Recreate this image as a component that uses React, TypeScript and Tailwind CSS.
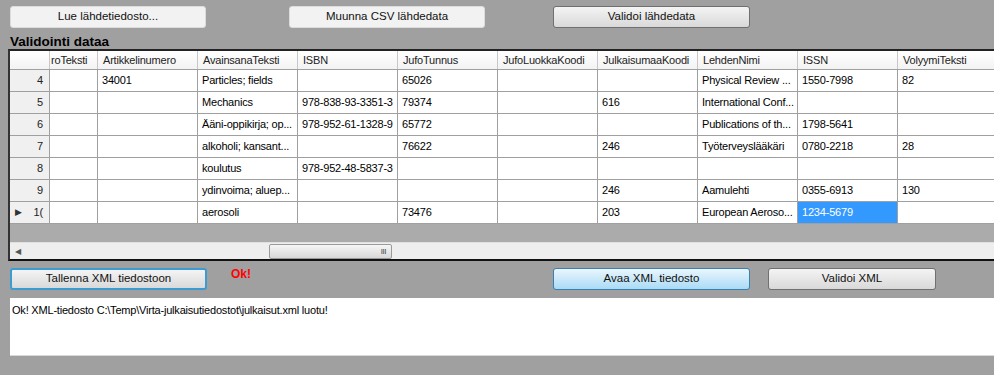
import React from "react";

type Row = { n: string; cells: string[]; current?: boolean };

const columns = [
  { name: "roTeksti", w: "w-[48px]" },
  { name: "Artikkelinumero", w: "w-[100px]" },
  { name: "AvainsanaTeksti", w: "w-[100px]" },
  { name: "ISBN", w: "w-[100px]" },
  { name: "JufoTunnus", w: "w-[100px]" },
  { name: "JufoLuokkaKoodi", w: "w-[100px]" },
  { name: "JulkaisumaaKoodi", w: "w-[100px]" },
  { name: "LehdenNimi", w: "w-[100px]" },
  { name: "ISSN", w: "w-[100px]" },
  { name: "VolyymiTeksti", w: "w-[100px]" },
];

const rows: Row[] = [
  { n: "4", cells: ["", "34001", "Particles; fields", "", "65026", "", "", "Physical Review ...", "1550-7998", "82"] },
  { n: "5", cells: ["", "", "Mechanics", "978-838-93-3351-3", "79374", "", "616", "International Conf...", "", ""] },
  { n: "6", cells: ["", "", "Ääni-oppikirja; op...", "978-952-61-1328-9", "65772", "", "", "Publications of th...", "1798-5641", ""] },
  { n: "7", cells: ["", "", "alkoholi; kansant...", "", "76622", "", "246", "Työterveyslääkäri", "0780-2218", "28"] },
  { n: "8", cells: ["", "", "koulutus", "978-952-48-5837-3", "", "", "", "", "", ""] },
  { n: "9", cells: ["", "", "ydinvoima; aluep...", "", "", "", "246", "Aamulehti", "0355-6913", "130"] },
  { n: "1(", cells: ["", "", "aerosoli", "", "73476", "", "203", "European Aeroso...", "1234-5679", ""], current: true },
];

function WinButton({ label, variant = "normal", className = "" }: { label: string; variant?: "flat" | "normal" | "focus" | "hover"; className?: string }) {
  const styles = {
    flat: "bg-[#f2f2f2] border border-[#dcdcdc]",
    normal: "bg-gradient-to-b from-[#f4f4f4] to-[#d9d9d9] border border-[#707070]",
    focus: "bg-gradient-to-b from-[#f4f4f4] to-[#d9d9d9] border-2 border-[#3c9bd0]",
    hover: "bg-gradient-to-b from-[#eaf6fd] to-[#a9dbf6] border border-[#3c7fb1]",
  }[variant];
  return (
    <button className={`h-[22px] shrink-0 rounded-[3px] flex items-center justify-center text-[11.5px] text-[#111] ${styles} ${className}`}>
      {label}
    </button>
  );
}

export default function App() {
  return (
    <div className="w-[994px] h-[375px] bg-[#a0a0a0] overflow-hidden" style={{ fontFamily: '"Liberation Sans", Arial, sans-serif' }}>
      {/* top buttons */}
      <div className="flex items-center pt-[6px] pl-[10px]">
        <WinButton label="Lue lähdetiedosto..." variant="flat" className="w-[196px]" />
        <WinButton label="Muunna CSV lähdedata" variant="flat" className="w-[196px] ml-[83px]" />
        <WinButton label="Validoi lähdedata" className="w-[197px] ml-[68px]" />
      </div>

      <div className="pl-[10px] mt-[6px] h-[15px] leading-[15px] text-[13.5px] font-bold text-black">Validointi dataa</div>

      {/* grid */}
      <div className="ml-[8px] w-[986px] h-[212px] border-t-2 border-l-2 border-b-2 border-t-[#222] border-l-[#333] border-b-[#111] bg-[#ababab] overflow-hidden flex flex-col text-[11px] tracking-[-0.2px]">
        <div className="flex h-[19px] shrink-0 bg-gradient-to-b from-white to-[#f3f3f3] border-b border-[#a0a0a0]">
          <div className="w-[40px] shrink-0 border-r border-[#c8c8c8]" />
          {columns.map((c, i) => (
            <div key={c.name} className={`${c.w} shrink-0 border-r border-[#c8c8c8] ${i === 0 ? "pl-[1px]" : "pl-[5px]"} flex items-center text-[#222] whitespace-nowrap overflow-hidden`}>
              {c.name}
            </div>
          ))}
        </div>
        {rows.map((r) => (
          <div key={r.n} className="flex h-[22px] shrink-0">
            <div className="w-[40px] shrink-0 bg-[#f0f0f0] border-r border-b border-[#a0a0a0] flex items-center justify-between pl-[5px] pr-[6px] text-[#222]">
              <span className="text-[9px] text-[#333]">{r.current ? "▶" : ""}</span>
              <span>{r.n}</span>
            </div>
            {columns.map((c, i) => {
              const sel = r.current && c.name === "ISSN";
              return (
                <div
                  key={c.name}
                  className={`${c.w} shrink-0 border-r border-b border-[#a0a0a0] pl-[4px] flex items-center whitespace-nowrap overflow-hidden ${sel ? "bg-[#3399ff] text-white" : "bg-white text-black"}`}
                >
                  {r.cells[i]}
                </div>
              );
            })}
          </div>
        ))}
        <div className="flex-1" />
        {/* horizontal scrollbar */}
        <div className="h-[17px] shrink-0 bg-[#eeeeee] flex items-center relative border-t border-[#e0e0e0]">
          <span className="absolute left-[5px] top-[3px] text-[8px] text-[#555]">◀</span>
          <div className="absolute left-[259px] top-[1px] w-[123px] h-[15px] rounded-[2px] border border-[#9a9a9a] bg-gradient-to-b from-[#f6f6f6] to-[#d8d8d8] flex items-center justify-end pr-[5px]">
            <span className="text-[8px] text-[#444] tracking-[-0.5px] leading-none">III</span>
          </div>
        </div>
      </div>

      {/* bottom buttons */}
      <div className="flex items-center pl-[10px] mt-[7px] h-[22px]">
        <WinButton label="Tallenna XML tiedostoon" variant="focus" className="w-[197px]" />
        <div className="w-[346px] shrink-0 pl-[24px] h-[22px] flex items-start">
          <span className="text-[12px] font-bold text-[#ff0000] leading-[12px]">Ok!</span>
        </div>
        <WinButton label="Avaa XML tiedosto" variant="hover" className="w-[197px]" />
        <WinButton label="Validoi XML" className="w-[168px] ml-[18px]" />
      </div>

      {/* output text box */}
      <div className="ml-[10px] mt-[8px] h-[58px] bg-white border-b border-[#d8d8d8] px-[2px] pt-[4px] text-[11px] text-black tracking-[-0.2px]">
        Ok! XML-tiedosto C:\Temp\Virta-julkaisutiedostot\julkaisut.xml luotu!
      </div>
    </div>
  );
}
